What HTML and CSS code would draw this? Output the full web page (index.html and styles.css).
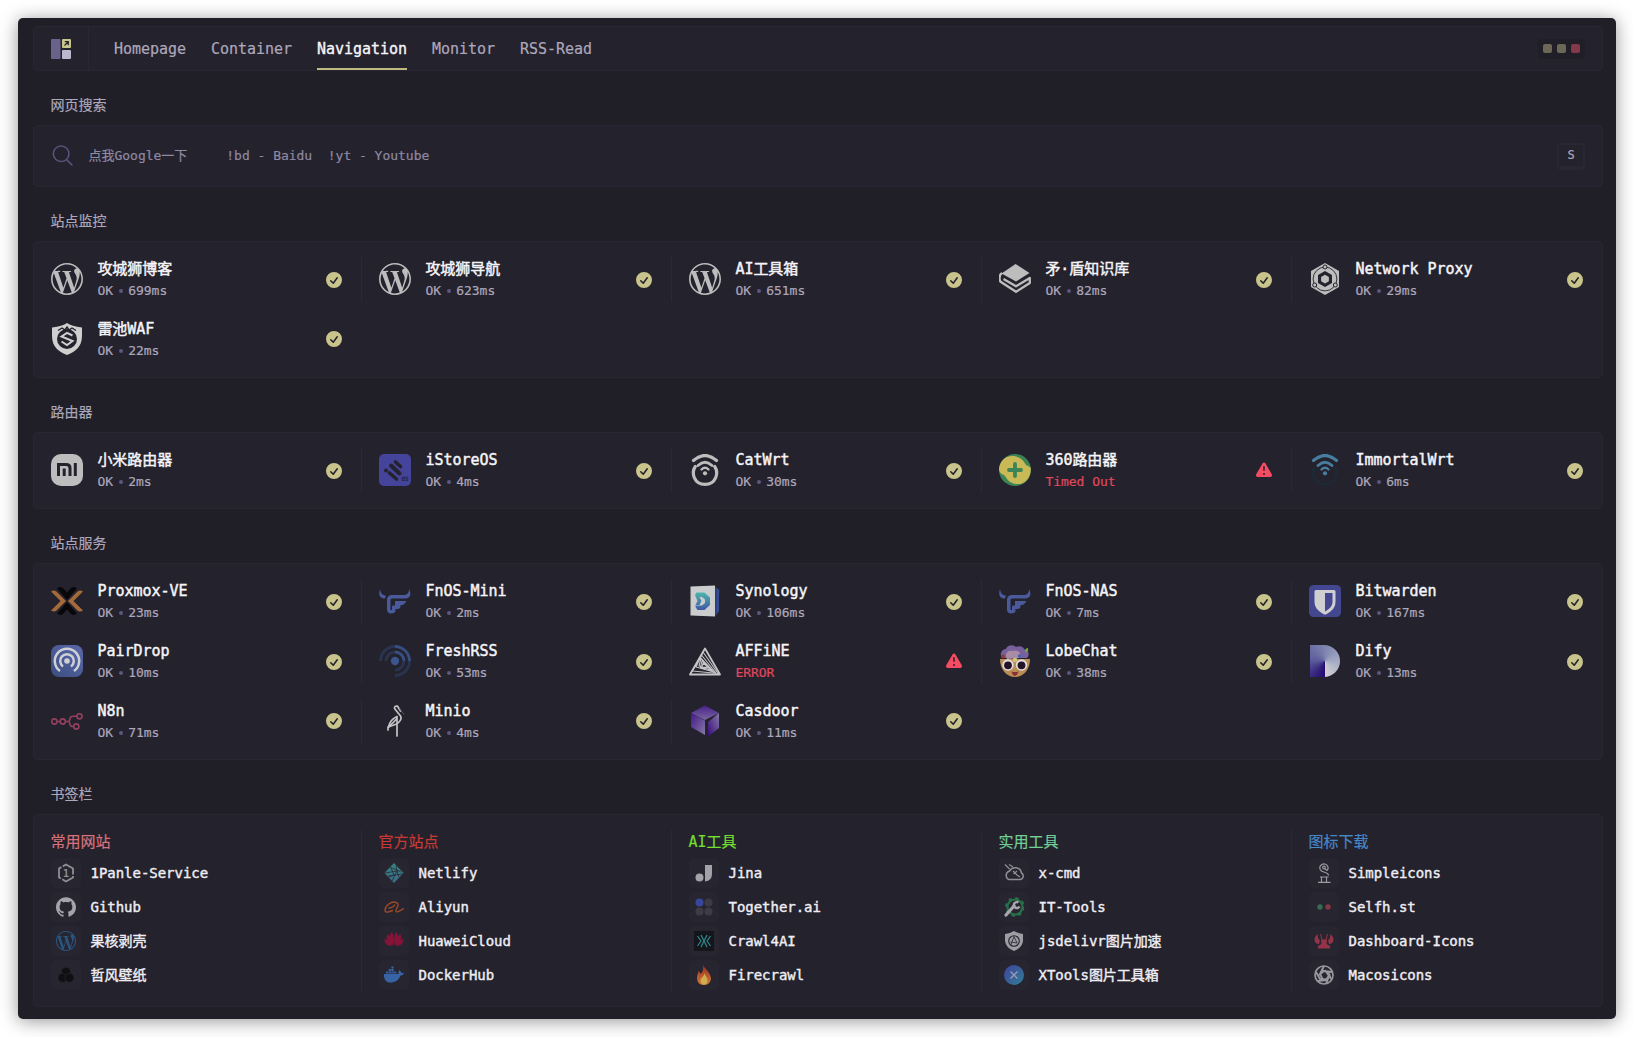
FILE: index.html
```html
<!DOCTYPE html>
<html lang="zh-CN">
<head>
<meta charset="utf-8">
<title>Navigation</title>
<link rel="stylesheet" href="styles.css">
</head>
<body>
<svg class="sprite" aria-hidden="true">
  <defs>
    <linearGradient id="g-pair" x1="0" y1="1" x2="1" y2="0"><stop offset="0" stop-color="#3c4d80"/><stop offset="1" stop-color="#5b69ad"/></linearGradient>
    <linearGradient id="g-syn" x1="0" y1="0" x2="0" y2="1"><stop offset="0" stop-color="#4fb5ab"/><stop offset="1" stop-color="#3f58a8"/></linearGradient>
    <linearGradient id="g-cube1" x1="0" y1="0" x2="0" y2="1"><stop offset="0" stop-color="#48208a"/><stop offset="1" stop-color="#79689f"/></linearGradient>
    <linearGradient id="g-cube2" x1="0" y1="0" x2="1" y2="1"><stop offset="0" stop-color="#45168a"/><stop offset="1" stop-color="#857ba5"/></linearGradient>
    <linearGradient id="g-cube3" x1="1" y1="0" x2="0" y2="1"><stop offset="0" stop-color="#857ba5"/><stop offset="1" stop-color="#37087c"/></linearGradient>
    <linearGradient id="g-net" x1="0" y1="0" x2="0" y2="1"><stop offset="0" stop-color="#34847e"/><stop offset="1" stop-color="#3b6b8b"/></linearGradient>
    <linearGradient id="g-fire" x1="0" y1="0" x2="0" y2="1"><stop offset="0" stop-color="#9c2f25"/><stop offset="1" stop-color="#cf7a35"/></linearGradient>
    <linearGradient id="g-xt" x1="0" y1="0" x2="1" y2="1"><stop offset="0" stop-color="#41429c"/><stop offset="1" stop-color="#2f7f95"/></linearGradient>
  </defs>
  <symbol id="ok" viewBox="0 0 20 20"><path fill-rule="evenodd" d="M10 18a8 8 0 1 0 0-16 8 8 0 0 0 0 16Zm3.857-9.809a.75.75 0 0 0-1.214-.882l-3.483 4.79-1.88-1.88a.75.75 0 1 0-1.06 1.061l2.5 2.5a.75.75 0 0 0 1.137-.089l4-5.5Z"/></symbol>
  <symbol id="warn" viewBox="0 0 20 20"><path fill-rule="evenodd" d="M8.485 2.495c.673-1.167 2.357-1.167 3.03 0l6.28 10.875c.673 1.167-.17 2.625-1.516 2.625H3.72c-1.347 0-2.189-1.458-1.515-2.625L8.485 2.495ZM10 5a.75.75 0 0 1 .75.75v3.5a.75.75 0 0 1-1.5 0v-3.5A.75.75 0 0 1 10 5Zm0 9a1 1 0 1 0 0-2 1 1 0 0 0 0 2Z"/></symbol>
  <symbol id="wp" viewBox="0 0 24 24"><path d="M21.469 6.825c.84 1.537 1.318 3.3 1.318 5.175 0 3.979-2.156 7.456-5.363 9.325l3.295-9.527c.615-1.54.82-2.771.82-3.864 0-.405-.026-.78-.07-1.11m-7.981.105c.647-.03 1.232-.105 1.232-.105.582-.075.514-.93-.067-.899 0 0-1.755.135-2.88.135-1.064 0-2.85-.15-2.85-.15-.585-.03-.661.855-.075.885 0 0 .54.061 1.125.09l1.68 4.605-2.37 7.08L5.354 6.9c.649-.03 1.234-.1 1.234-.1.585-.075.516-.93-.065-.896 0 0-1.746.138-2.874.138-.2 0-.438-.008-.69-.015C4.911 3.15 8.235 1.215 12 1.215c2.809 0 5.365 1.072 7.286 2.833-.046-.003-.091-.009-.141-.009-1.06 0-1.812.923-1.812 1.914 0 .89.513 1.643 1.06 2.531.411.72.89 1.643.89 2.977 0 .915-.354 1.994-.821 3.479l-1.075 3.585-3.9-11.61.001.014zM12 22.784c-1.059 0-2.081-.153-3.048-.437l3.237-9.406 3.315 9.087c.024.053.05.101.078.149-1.12.393-2.325.609-3.582.609M1.211 12c0-1.564.336-3.05.935-4.39L7.29 21.709C3.694 19.96 1.212 16.271 1.211 12M12 0C5.385 0 0 5.385 0 12s5.385 12 12 12 12-5.385 12-12S18.615 0 12 0"/></symbol>
  <symbol id="fnos" viewBox="0 0 32 32"><path fill="#4a5a9b" d="M1 4C-1 10 1 13.500 6 13.500L7 10.500C3.500 10.500 1.500 8 1 4ZM30 4C30 8 28 10 24.500 10H13C10 10 8 12 8 14.500V24.500C8 27 9.500 28.500 12 28.500C15 28.500 16.500 27.500 16.500 25.500V24H18.500C20.500 24 21.500 22.800 21.500 21.500V20H23C25 20 26 18 27.500 16H16V20.500H14.500C13.500 20.500 13 21 13 22V25H11.500V15Q11.500 13.500 13 13.500H26C31 13.500 33 10 30 4Z"/></symbol>
</svg>

<main class="window">
  <header class="topbar">
    <div class="logo">
      <svg width="20" height="20" viewBox="0 0 20 20"><rect width="9.500" height="20" rx="1" fill="#69628a"/><rect x="11" width="9" height="9" rx="1" fill="#c8c48c"/><rect x="11" y="11" width="9" height="9" rx="1" fill="#bcb8cf"/><path d="M13.500 6.500 17 3M13.800 2.700H17.300V6.200" fill="none" stroke="#24222c" stroke-width="1.200"/></svg>
    </div>
    <nav class="nav">
      <a>Homepage</a><a>Container</a><a class="active">Navigation</a><a>Monitor</a><a>RSS-Read</a>
    </nav>
    <div class="themes"><i></i><i></i><i class="red"></i></div>
  </header>

  <h2 class="title">网页搜索</h2>
  <section class="card search">
    <svg class="glass" width="25" height="25" viewBox="0 0 24 24"><path d="m21 21-5.200-5.200m0 0A7.500 7.500 0 1 0 5.200 5.200a7.500 7.500 0 0 0 10.600 10.600Z" fill="none" stroke="#59527c" stroke-width="1.500" stroke-linecap="round"/></svg>
    <span class="query">点我Google一下     !bd - Baidu  !yt - Youtube</span>
    <kbd class="key">S</kbd>
  </section>

  <h2 class="title">站点监控</h2>
  <section class="card grid">
    <div class="site"><svg class="icon light"><use href="#wp"/></svg><div class="info"><b>攻城狮博客</b><p>OK<i></i>699ms</p></div><svg class="state"><use href="#ok"/></svg></div>
    <div class="site"><svg class="icon light"><use href="#wp"/></svg><div class="info"><b>攻城狮导航</b><p>OK<i></i>623ms</p></div><svg class="state"><use href="#ok"/></svg></div>
    <div class="site"><svg class="icon light"><use href="#wp"/></svg><div class="info"><b>AI工具箱</b><p>OK<i></i>651ms</p></div><svg class="state"><use href="#ok"/></svg></div>
    <div class="site"><svg class="icon light" viewBox="0 0 32 32"><path d="M16.500 1 30.500 10 17 18.500 2.500 10.500Z"/><path d="M3 10C-.5 12 .3 18 2 19L17 28.800 30.800 20V15L17 23.300 4.500 16" fill="none" stroke="#bdbdbe" stroke-width="2.300" stroke-linejoin="round"/></svg><div class="info"><b>矛·盾知识库</b><p>OK<i></i>82ms</p></div><svg class="state"><use href="#ok"/></svg></div>
    <div class="site"><svg class="icon light" viewBox="0 0 32 32"><path d="M16 0 30 8V24L16 32 2 24V8Z"/><circle cx="16" cy="16" r="11.900" fill="none" stroke="#24222c" stroke-width=".9"/><path d="M16 8 23 12V20L16 24 9 20V12Z" fill="#24222c"/><path d="M16 11.800 19.900 14V18.200L16 20.500 12.100 18.200V14Z"/><g stroke="#24222c" stroke-width="1"><circle cx="16" cy="4" r="2"/><circle cx="5.700" cy="22" r="2"/><circle cx="26.300" cy="22" r="2"/></g></svg><div class="info"><b>Network Proxy</b><p>OK<i></i>29ms</p></div><svg class="state"><use href="#ok"/></svg></div>
    <div class="site late"><svg class="icon light" viewBox="0 0 32 32"><path fill="#cfcfd0" d="M16 0C19 2 24 4 31 4.500V13C31 24 24 29 16 32 8 29 1 24 1 13V4.500C8 4 13 2 16 0Z"/><circle cx="16" cy="16" r="10" fill="#24222c"/><path d="M7 7.500 11 5 14 7 16 4 18 7 21 5 25 7.500" fill="none" stroke="#24222c" stroke-width="1.400"/><path d="M21.500 12.500 16 9.800 10.500 13.500 21.500 18 16 22 10.500 18.500" fill="none" stroke="#cfcfd0" stroke-width="2"/></svg><div class="info"><b>雷池WAF</b><p>OK<i></i>22ms</p></div><svg class="state"><use href="#ok"/></svg></div>
  </section>

  <h2 class="title">路由器</h2>
  <section class="card grid">
    <div class="site"><svg class="icon" viewBox="0 0 32 32"><rect width="32" height="32" rx="10" fill="#bdbdbe"/><path d="M7.500 22V10.500H15Q19 10.500 19 14V22M13.200 14.500V22M24.300 9V22" fill="none" stroke="#24222c" stroke-width="3"/></svg><div class="info"><b>小米路由器</b><p>OK<i></i>2ms</p></div><svg class="state"><use href="#ok"/></svg></div>
    <div class="site"><svg class="icon" viewBox="0 0 32 32"><rect width="32" height="32" rx="5" fill="#44449b"/><g stroke="#24222c" stroke-linecap="round" fill="none"><path d="M16.500 8 21.500 12.500" stroke-width="3.600"/><path d="M12 11.500 20.500 19.500" stroke-width="4"/><path d="M10.500 19 17.500 25" stroke-width="3.600"/></g><circle cx="7" cy="16.500" r="2" fill="#24222c"/><text x="22.500" y="27" class="tiny">OS</text></svg><div class="info"><b>iStoreOS</b><p>OK<i></i>4ms</p></div><svg class="state"><use href="#ok"/></svg></div>
    <div class="site"><svg class="icon" viewBox="0 0 32 32"><g fill="none" stroke="#bdbdbe" stroke-width="3.200" stroke-linecap="round"><path d="M4.500 6.500Q16-3.500 27.500 6.500"/><path d="M9 11.500Q16 5 23 11.500" stroke-width="2.800"/><path d="M12.500 15.500Q16 12 19.500 15.500" stroke-width="2.400"/><path d="M6.300 12.500C2 19 5 30.300 16 30.300S30 19 25.700 12.500"/></g><circle cx="16" cy="19.300" r="2.100" fill="#bdbdbe"/></svg><div class="info"><b>CatWrt</b><p>OK<i></i>30ms</p></div><svg class="state"><use href="#ok"/></svg></div>
    <div class="site"><svg class="icon" viewBox="0 0 32 32"><circle cx="16" cy="16" r="16" fill="#3c8356"/><path d="M0 16C0 7 7 1 15 2 22 3 25 7 27 11Q30 12 31.800 14C32 25 25 31 17 30 9 29 8 24 5 21Q1 20 0 16Z" fill="#c9b957"/><path d="M16 10V22M10 16H22" stroke="#3c8356" stroke-width="3.800" stroke-linecap="round"/></svg><div class="info"><b>360路由器</b><p class="bad">Timed Out</p></div><svg class="state bad"><use href="#warn"/></svg></div>
    <div class="site"><svg class="icon" viewBox="0 0 32 32"><path d="M6.300 12.500C2 19 5 30.300 16 30.300S30 19 25.700 12.500" fill="none" stroke="#1f2835" stroke-width="3.200"/><g fill="none" stroke="#477e9f" stroke-width="3.200" stroke-linecap="round"><path d="M4.500 6.500Q16-3.500 27.500 6.500"/><path d="M9 11.500Q16 5 23 11.500" stroke-width="2.800"/><path d="M12.500 15.500Q16 12 19.500 15.500" stroke-width="2.400"/></g><circle cx="16" cy="19.300" r="2.100" fill="#477e9f"/></svg><div class="info"><b>ImmortalWrt</b><p>OK<i></i>6ms</p></div><svg class="state"><use href="#ok"/></svg></div>
  </section>

  <h2 class="title">站点服务</h2>
  <section class="card grid">
    <div class="site"><svg class="icon" viewBox="0 0 32 32"><g fill="#08080b"><path d="M6 3.500Q9 1 12 3L16 7.500 20 3Q23 1 26 3.500L16 15Z"/><path d="M6 28.500Q9 31 12 29L16 24.500 20 29Q23 31 26 28.500L16 17Z"/></g><g fill="#a46a39"><path d="M0 6.500Q3 4.500 5.500 6.500L15 16 5.500 25.500Q3 27.500 0 25.500L9.500 16Z"/><path d="M32 6.500Q29 4.500 26.500 6.500L17 16 26.500 25.500Q29 27.500 32 25.500L22.500 16Z"/></g></svg><div class="info"><b>Proxmox-VE</b><p>OK<i></i>23ms</p></div><svg class="state"><use href="#ok"/></svg></div>
    <div class="site"><svg class="icon"><use href="#fnos"/></svg><div class="info"><b>FnOS-Mini</b><p>OK<i></i>2ms</p></div><svg class="state"><use href="#ok"/></svg></div>
    <div class="site"><svg class="icon" viewBox="0 0 32 32"><path d="M25 1.500 29 3.500 30.500 5 29 28 26 31Z" fill="#2f3a7c"/><path d="M27.500 3V29L30 26V5Z" fill="#354c8e"/><path d="M1.500 1.500 26 .5V31.500L1.500 30.500Z" fill="#cbccce"/><path d="M7.500 7.500H15.500L21 12.500V20L15.500 25H8.500L6.500 22V20.500H13L16 18V14.500L13 12H10.500L12.500 16 10.500 20H6.500L8.500 16 6 10Z" fill="url(#g-syn)"/></svg><div class="info"><b>Synology</b><p>OK<i></i>106ms</p></div><svg class="state"><use href="#ok"/></svg></div>
    <div class="site"><svg class="icon"><use href="#fnos"/></svg><div class="info"><b>FnOS-NAS</b><p>OK<i></i>7ms</p></div><svg class="state"><use href="#ok"/></svg></div>
    <div class="site"><svg class="icon" viewBox="0 0 32 32"><rect width="32" height="32" rx="4.500" fill="#42478f"/><path d="M5.500 6.500Q5.500 5 7 5H25Q26.500 5 26.500 6.500V17C26.500 24 20 28 16 29.700 12 28 5.500 24 5.500 17Z" fill="#cfcfd2"/><path d="M16 8H23.500V17C23.500 21.500 19.500 24.500 16 26.500Z" fill="#42478f"/></svg><div class="info"><b>Bitwarden</b><p>OK<i></i>167ms</p></div><svg class="state"><use href="#ok"/></svg></div>

    <div class="site"><svg class="icon" viewBox="0 0 32 32"><rect width="32" height="32" rx="8" fill="url(#g-pair)"/><circle cx="16" cy="16" r="2.800" fill="#cfd0d6"/><g fill="none" stroke="#cfd0d6" stroke-width="2.500"><path d="M12 21.500A6.800 6.800 0 1 1 20 21.500"/><path d="M9 26A12.200 12.200 0 1 1 23 26"/></g></svg><div class="info"><b>PairDrop</b><p>OK<i></i>10ms</p></div><svg class="state"><use href="#ok"/></svg></div>
    <div class="site"><svg class="icon" viewBox="0 0 32 32"><circle cx="16" cy="16" r="4.200" fill="#3a548c"/><g fill="none" stroke-width="2.900" stroke="#2a3350"><path d="M1.500 16A14.500 14.500 0 0 1 16 1.500M7 16A9 9 0 0 1 16 7M16 25A9 9 0 0 0 25 16M16 30.500A14.500 14.500 0 0 0 30.500 16"/><path stroke="#374e82" d="M16 1.500A14.500 14.500 0 0 1 30.500 16M16 7A9 9 0 0 1 25 16"/></g></svg><div class="info"><b>FreshRSS</b><p>OK<i></i>53ms</p></div><svg class="state"><use href="#ok"/></svg></div>
    <div class="site"><svg class="icon" viewBox="0 0 32 32"><g fill="none" stroke="#c4c4c6" stroke-linejoin="round"><path d="M16 3.500 31 29.500H1Z" stroke-width="1.800"/><path d="M14 7 29 28.500 3.500 26ZM12.500 10 26.500 27.500 7 22ZM12 13 24 26 10 21ZM13 15.500 21.500 24.500 11.500 22.500ZM14 18 19.500 22.500 13 22Z" stroke-width="1.100"/></g></svg><div class="info"><b>AFFiNE</b><p class="bad">ERROR</p></div><svg class="state bad"><use href="#warn"/></svg></div>
    <div class="site"><svg class="icon" viewBox="0 0 32 32"><path d="M1 14H31C31 24 25 32 16 32S1 24 1 14Z" fill="#b98d56"/><path d="M3 13C0 9 3 4 7 4 8 0 14-1 17 2 21 0 25 2 25 4 30 5 31 10 28 13Z" fill="#77609c"/><path d="M8 14C5 9 9 5 13 6 18 4 23 7 21 13Z" fill="#a98ba5"/><path d="M26 7Q26 3 29 3 30 8 26 7Z" fill="#6fa93d"/><circle cx="4" cy="11.500" r="2" fill="#8d3a3c"/><g fill="#e3dedd"><circle cx="9" cy="20" r="5.700"/><circle cx="22.500" cy="20" r="5.700"/></g><g fill="#241227"><circle cx="9" cy="20.300" r="3.900"/><circle cx="22.500" cy="20.300" r="3.900"/></g><circle cx="20.500" cy="11" r="1.700" fill="#4661b0"/><circle cx="16" cy="15" r="2.300" fill="#d0c179"/><path d="M12.500 26.500Q16 27.500 19.500 26.500 18 31 16 31 14 31 12.500 26.500Z" fill="#8c3036"/></svg><div class="info"><b>LobeChat</b><p>OK<i></i>38ms</p></div><svg class="state"><use href="#ok"/></svg></div>
    <div class="site"><span class="icon"><span class="dify"></span></span><div class="info"><b>Dify</b><p>OK<i></i>13ms</p></div><svg class="state"><use href="#ok"/></svg></div>

    <div class="site late"><svg class="icon" viewBox="0 0 32 32"><g fill="none" stroke="#93405f" stroke-width="1.600"><circle cx="3.400" cy="16.500" r="2.600"/><circle cx="11.800" cy="16.500" r="2.600"/><circle cx="28.500" cy="11.300" r="2.600"/><circle cx="25.300" cy="21.500" r="2.600"/><path d="M6 16.500H9.200M14.400 16.500H16.500Q18.500 16.500 18.800 14.500L19 13.500Q19.500 11.300 22 11.300H26M16.500 16.500Q18.500 16.500 18.800 18.500L19 19.500Q19.500 21.500 22 21.500H22.700"/></g></svg><div class="info"><b>N8n</b><p>OK<i></i>71ms</p></div><svg class="state"><use href="#ok"/></svg></div>
    <div class="site late"><svg class="icon" viewBox="0 0 32 32"><g fill="none" stroke="#c4c4c6" stroke-width="1.700" stroke-linejoin="round" stroke-linecap="round"><path d="M21.500 6 18.500 1.200Q15.500 .5 15.500 3.500L21.500 11Q23.500 15 17.500 19L9.500 22Q11 14.500 18 11.500V31"/><path d="M9 25V22M17.500 14Q14 18 10 21.500"/></g><path d="M20.500 3.500 25 9.500" stroke="#56555e" stroke-width="1"/></svg><div class="info"><b>Minio</b><p>OK<i></i>4ms</p></div><svg class="state"><use href="#ok"/></svg></div>
    <div class="site late"><svg class="icon" viewBox="0 0 32 32"><path d="M16 .5 30 8 16 15 2 8Z" fill="url(#g-cube1)"/><path d="M2 8 16 15.500V30L2 22Z" fill="url(#g-cube2)"/><path d="M30 8V23L19 31.500V17Z" fill="url(#g-cube3)"/></svg><div class="info"><b>Casdoor</b><p>OK<i></i>11ms</p></div><svg class="state"><use href="#ok"/></svg></div>
  </section>

  <h2 class="title">书签栏</h2>
  <section class="card grid marks">
    <div class="group">
      <h3 class="c-pink">常用网站</h3>
      <a><span class="box"><svg viewBox="0 0 20 20"><path d="M10 1.500 17 5.500V14.500L10 18.500 3 14.500V5.500Z" fill="none" stroke="#8f8e96" stroke-width="1.800" stroke-dasharray="14 1.500"/><text x="7" y="14.300" class="one">1</text></svg></span>1Panle-Service</a>
      <a><span class="box"><svg viewBox="0 0 24 24"><path fill="#a5a4aa" d="M12 .297c-6.630 0-12 5.373-12 12 0 5.303 3.438 9.800 8.205 11.385.6.113.82-.258.82-.577 0-.285-.01-1.040-.015-2.040-3.338.724-4.042-1.610-4.042-1.610C4.422 18.070 3.633 17.700 3.633 17.700c-1.087-.744.084-.729.084-.729 1.205.084 1.838 1.236 1.838 1.236 1.070 1.835 2.809 1.305 3.495.998.108-.776.417-1.305.76-1.605-2.665-.3-5.466-1.332-5.466-5.930 0-1.310.465-2.380 1.235-3.220-.135-.303-.54-1.523.105-3.176 0 0 1.005-.322 3.300 1.230.96-.267 1.980-.399 3-.405 1.020.006 2.040.138 3 .405 2.280-1.552 3.285-1.230 3.285-1.230.645 1.653.24 2.873.12 3.176.765.84 1.230 1.910 1.230 3.220 0 4.610-2.805 5.625-5.475 5.920.42.36.81 1.096.81 2.220 0 1.606-.015 2.896-.015 3.286 0 .315.21.69.825.57C20.565 22.092 24 17.592 24 12.297c0-6.627-5.373-12-12-12"/></svg></span>Github</a>
      <a><span class="box"><svg fill="#2a5580"><use href="#wp"/></svg></span>果核剥壳</a>
      <a><span class="box"><svg viewBox="0 0 20 20"><g fill="#101013" stroke="#2a2833" stroke-width=".6"><circle cx="10" cy="6.800" r="4.500"/><circle cx="6.500" cy="12.800" r="4.500"/><circle cx="13.500" cy="12.800" r="4.500"/></g></svg></span>哲风壁纸</a>
    </div>
    <div class="group">
      <h3 class="c-red">官方站点</h3>
      <a><span class="box"><svg viewBox="0 0 20 20"><path d="M10 0 19.500 10 10 20 .5 10Z" fill="url(#g-net)"/><path d="M6 4 17 9M1 10 13 8 12 2M4 13 19 11M8 18 13 8 15 14M7 5 10 12 5 14" stroke="#292733" stroke-width=".8" fill="none"/></svg></span>Netlify</a>
      <a><span class="box"><svg viewBox="0 0 20 20"><path d="M12 5.500C7.500 3.500 1 9 1 13 1 16 4 15.500 8.500 13.500M5 11Q9.500 10.500 10.500 8M12 5.500C17.500 6.500 10.500 13 12 14.500 13.500 16 17 13 19.500 11.500" fill="none" stroke="#9c4a27" stroke-width="1.400" stroke-linecap="round"/></svg></span>Aliyun</a>
      <a><span class="box"><svg viewBox="0 0 20 20"><g fill="#861338"><path d="M9.600 14.500C5 9 5 3 8 1 10 4 10 9 9.600 14.500Z"/><path d="M10.400 14.500C15 9 15 3 12 1 10 4 10 9 10.400 14.500Z"/><path d="M8.700 14.500C3 11 1 6 4 3 7 6 8.500 10 8.700 14.500Z"/><path d="M11.300 14.500C17 11 19 6 16 3 13 6 11.500 10 11.300 14.500Z"/><path d="M8 15C3 15 0 12 .5 7.500 4.500 9.500 7 12 8 15Z"/><path d="M12 15C17 15 20 12 19.500 7.500 15.500 9.500 13 12 12 15Z"/></g></svg></span>HuaweiCloud</a>
      <a><span class="box"><svg viewBox="0 0 20 20"><path fill="#3864a5" d="M0 9H14.500Q14 6.500 15.500 5 17 6 17 7.800 18.500 7.500 20 8.500 19 10.500 16.500 10.500C14.500 15.500 11 17.500 6.500 17.500 2 17.500-.5 14 0 9ZM2 6.500H4.200V8.500H2ZM4.700 6.500H6.900V8.500H4.700ZM7.400 6.500H9.600V8.500H7.400ZM10.100 6.500H12.300V8.500H10.100ZM4.700 4H6.900V6H4.700ZM7.400 4H9.600V6H7.400ZM7.400 1.500H9.600V3.500H7.400Z"/></svg></span>DockerHub</a>
    </div>
    <div class="group">
      <h3 class="c-lime">AI工具</h3>
      <a><span class="box"><svg viewBox="0 0 20 20" fill="#a3a2a9"><circle cx="5.500" cy="14.500" r="4"/><path d="M11 2H18V11Q18 18 11 18.500Z"/></svg></span>Jina</a>
      <a><span class="box"><svg viewBox="0 0 20 20"><circle cx="5.500" cy="5.500" r="4" fill="#3a469c"/><g fill="#3d3b46"><circle cx="14.500" cy="5.500" r="4"/><circle cx="5.500" cy="14.500" r="4"/><circle cx="14.500" cy="14.500" r="4"/></g></svg></span>Together.ai</a>
      <a><span class="box"><svg viewBox="0 0 20 20"><rect width="20" height="20" fill="#15161b"/><path d="M7 4 13 16M13 4 7 16M3.500 5 7 10 3.500 15M16.500 5 13 10 16.500 15" fill="none" stroke="#2f8b8d" stroke-width="1.200"/></svg></span>Crawl4AI</a>
      <a><span class="box"><svg viewBox="0 0 20 20"><path d="M9 0C11 4 16 7 17 13 17 17.500 14 20 10 20S3 17.500 3 13C3 10 4 9 4.500 6Q6 7 6.500 9C9 7 9.500 4 9 0Z" fill="url(#g-fire)"/><path d="M10.500 8C11 11 13.500 12 13.500 15.500 13.500 18 12 19.500 10 19.500S6.500 18 6.500 15.500C6.500 13 10 12 10.500 8Z" fill="#d0ad50"/></svg></span>Firecrawl</a>
    </div>
    <div class="group">
      <h3 class="c-green">实用工具</h3>
      <a><span class="box"><svg viewBox="0 0 20 20"><path d="M5 16.500H16A3.500 3.500 0 0 0 17.500 10 6.500 6.500 0 0 0 5.500 8 4.500 4.500 0 0 0 5 16.500Z" fill="none" stroke="#8f8e96" stroke-width="1.500"/><path d="M9 8 13 12 16 14M13 8 9.500 11M1 1.500 5.500 6M5 1.500 9 4" stroke="#8f8e96" stroke-width="1.300"/></svg></span>x-cmd</a>
      <a><span class="box"><svg viewBox="0 0 20 20"><circle cx="11" cy="10" r="7.500" fill="none" stroke="#28704a" stroke-width="2.200"/><circle cx="11" cy="10" r="9" fill="none" stroke="#28704a" stroke-width="1.800" stroke-dasharray="3.500 3.570"/><path d="M2 18 10 9" stroke="#a8a7ad" stroke-width="3.200" stroke-linecap="round"/><path d="M14.500 5.500A3 3 0 1 0 15.500 9.500" fill="none" stroke="#a8a7ad" stroke-width="2.500"/></svg></span>IT-Tools</a>
      <a><span class="box"><svg viewBox="0 0 20 20"><path d="M10 0Q14 2.500 19 3V10Q18 17 10 20 2 17 1 10V3Q6 2.500 10 0Z" fill="#9e9da3"/><circle cx="10" cy="10" r="5.300" fill="#9e9da3" stroke="#24222c" stroke-width="1.100"/><path d="M7 13.500 10 5.500 13 12 6.500 11" stroke="#24222c" stroke-width=".8" fill="none"/></svg></span>jsdelivr图片加速</a>
      <a><span class="box"><svg viewBox="0 0 20 20"><circle cx="10" cy="10" r="10" fill="url(#g-xt)"/><path d="M6.500 6.500 13.500 13.500M13.500 6.500 6.500 13.500" stroke="#9aa0b8" stroke-width="1.200"/></svg></span>XTools图片工具箱</a>
    </div>
    <div class="group">
      <h3 class="c-blue">图标下载</h3>
      <a><span class="box"><svg viewBox="0 0 20 20"><g fill="none" stroke="#9b9aa1" stroke-width="1.200"><path d="M6.500 7A4 4 0 1 1 13 7.500M6.500 7C8 10 14.500 8.500 14.500 12.500M13 7.500 11 6"/><circle cx="10" cy="4.500" r="1.300"/><path d="M4 19.300H16.500M6 14H14.500M7.500 14V19M12.500 14V19"/></g></svg></span>Simpleicons</a>
      <a><span class="box"><svg viewBox="0 0 20 20"><circle cx="6" cy="10" r="2.700" fill="#396b50"/><circle cx="14" cy="10" r="2.700" fill="#853746"/></svg></span>Selfh.st</a>
      <a><span class="box"><svg viewBox="0 0 20 20"><path fill="#953348" d="M4 3C-1 6-.5 13 5 13L6 9Q3 8 4 3ZM16 3C21 6 20.500 13 15 13L14 9Q17 8 16 3ZM7 9Q10 7.500 13 9L12.500 13 16 15V17.500H4V15L7.500 13Z"/><path d="M8 9 6.500 3M12 9 13.500 3" stroke="#953348"/></svg></span>Dashboard-Icons</a>
      <a><span class="box"><svg viewBox="0 0 20 20"><circle cx="10" cy="10" r="9" fill="none" stroke="#98979e" stroke-width="1.700"/><path d="M10 1 6 9 9 15M18 7 10 6 5 10M17 14 14 7 7 5M12 19 15 11 11 5M4 16 12 15 16 9M2 7 6 14 13 14.500" fill="none" stroke="#98979e" stroke-width="1.900"/></svg></span>Macosicons</a>
    </div>
  </section>
</main>
</body>
</html>
```
FILE: styles.css
```css
* { box-sizing: border-box; margin: 0; padding: 0; }

body {
  width: 1634px;
  height: 1037px;
  padding: 18px;
  overflow: hidden;
  background: #fff;
  font-family: "DejaVu Sans Mono", "Noto Sans CJK SC", monospace;
  color: #aca7bb;
  -webkit-text-stroke-width: .2px;
}

.sprite { position: absolute; width: 0; height: 0; }

.window {
  width: 1598px;
  height: 1001px;
  padding: 8px 13px 12px 15px;
  border-radius: 5px;
  background: #201e27;
  box-shadow: 0 2px 18px rgba(0, 0, 0, .42);
}

.topbar, .card {
  border: 1px solid #292733;
  border-radius: 5px;
  background: #24222c;
}

.topbar { display: flex; height: 45px; padding: 0 17px; }
.logo { display: flex; align-items: center; width: 38px; border-right: 1px solid #292733; }
.logo svg { display: block; }

.nav { display: flex; gap: 25px; margin-left: 25px; flex: 1; }
.nav a {
  height: 43px;
  line-height: 44px;
  font-size: 15px;
  letter-spacing: -.03px;
  border-bottom: 2px solid transparent;
}
.nav .active { color: #f5f4f8; border-color: #bfb980; -webkit-text-stroke-width: .35px; }

.themes {
  display: flex;
  align-items: center;
  align-self: center;
  gap: 5px;
  width: 47px;
  height: 20px;
  padding-left: 5px;
  border-radius: 4px;
  background: #201e27;
}
.themes i { width: 9px; height: 9px; border-radius: 2px; background: #6b6856; }
.themes .red { background: #84394a; }

.title {
  height: 20px;
  margin: 24px 0 10px 17.4px;
  font-size: 14px;
  line-height: 20px;
  font-weight: 400;
}

.search { display: flex; align-items: center; height: 62px; padding: 0 17px; }
.glass { margin: 0 0 2px -1px; }
.query {
  flex: 1;
  margin-left: 13.5px;
  padding-bottom: 1px;
  font-size: 13px;
  line-height: 20px;
  letter-spacing: -.02px;
  white-space: pre;
  color: #8f89a3;
}
.key {
  width: 28px;
  height: 27px;
  border: 2px solid #292733;
  border-bottom-width: 4px;
  border-radius: 4px;
  font: 12px/20px "DejaVu Sans Mono", monospace;
  text-align: center;
}

.grid {
  display: grid;
  grid-template-columns: repeat(4, 293px) 1fr;
  gap: 15px 17px;
  padding: 15px 17px;
}

.site { display: flex; align-items: center; height: 45px; }
.site:not(:nth-child(5n + 1)), .group + .group { border-left: 1px solid #2b2935; padding-left: 17px; }
.icon { display: block; flex: none; width: 32px; height: 32px; margin-bottom: 1px; }
.late .icon, .late .state { margin-bottom: 2px; }
.light { fill: #bdbdbe; }
.info { flex: 1; margin-left: 14.4px; }
.info b {
  display: block;
  height: 24px;
  font-size: 15px;
  line-height: 24px;
  font-weight: 400;
  letter-spacing: -.03px;
  color: #f5f4f8;
  -webkit-text-stroke-width: .45px;
}
.info p { display: flex; align-items: center; height: 21px; font-size: 13px; line-height: 19px; padding-bottom: 2px; letter-spacing: -.02px; }
.info i { width: 4px; height: 4px; margin: 1px 5.6px 0; border-radius: 50%; background: #5d5680; }
.info .bad { color: #e0485e; }
.state { display: block; width: 20px; height: 20px; fill: #c8c48c; }
.state.bad { fill: #f64b62; }
.tiny { font: bold 6px "DejaVu Sans Mono", monospace; fill: #24222c; }
.one { font: bold 10px "DejaVu Sans Mono", monospace; fill: #8f8e96; }

.dify {
  display: block;
  width: 30px;
  height: 32px;
  margin-left: 1px;
  border-radius: 0 16px 16px 0;
  background: conic-gradient(#7d84ae, #a4aac4 90deg, #d0d0d4 178deg, #270a72 182deg, #33237c 215deg, #5b5a9b 270deg, #7d84ae);
}

.marks { height: 193px; }
.group { display: flex; flex-direction: column; gap: 4px; }
.group h3 { height: 24px; font-size: 15px; line-height: 24px; font-weight: 400; letter-spacing: -.03px; text-indent: -.5px; }
.group a { display: flex; align-items: center; height: 30px; font-size: 14px; line-height: 20px; letter-spacing: -.03px; color: #efedf3; -webkit-text-stroke-width: .4px; }
.box { display: grid; place-items: center; width: 30px; height: 30px; margin-right: 9.5px; border-radius: 5px; background: #272530; -webkit-text-stroke-width: 0; }
.box svg { width: 20px; height: 20px; }

.c-pink { color: #d9727c; }
.c-red { color: #c83a33; }
.c-lime { color: #73df33; }
.c-green { color: #72cf96; }
.c-blue { color: #4787c8; }
```
